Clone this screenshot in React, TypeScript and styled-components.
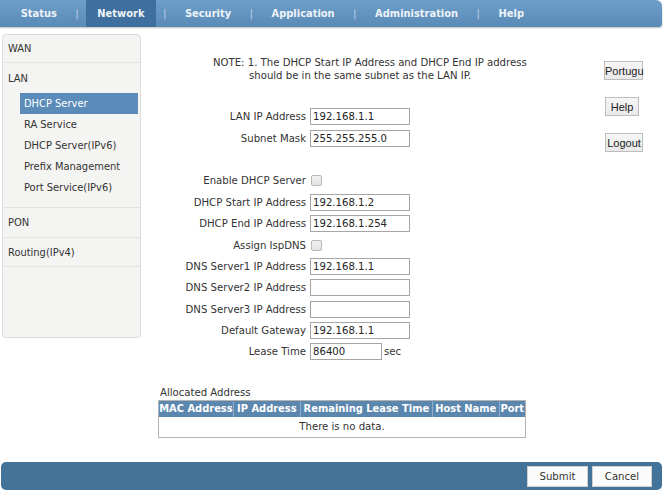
import React from "react";
import styled, { createGlobalStyle } from "styled-components";

const Global = createGlobalStyle`
  html, body { margin: 0; padding: 0; background: #fff; }
  body { font-family: "DejaVu Sans Condensed", "DejaVu Sans", sans-serif; font-size: 11.25px; color: #333; }
`;

const Page = styled.div`
  width: 664px;
  height: 492px;
  display: flex;
  flex-direction: column;
  overflow: hidden;
`;

const Nav = styled.div`
  height: 27px;
  margin: 0 2px 0 0;
  display: flex;
  align-items: stretch;
  padding-left: 9px;
  background: linear-gradient(#6d9dc9, #5a8ab6);
  border-radius: 0 6px 3px 0;
  box-shadow: 0 1px 2px rgba(0, 0, 0, 0.25);
`;

const Tab = styled.div<{ $active?: boolean }>`
  display: flex;
  align-items: center;
  padding: 0 11.7px;
  font-weight: bold;
  font-size: 11px;
  color: #eef3f8;
  background: ${(p) => (p.$active ? "#3e6f9f" : "transparent")};
`;

const Sep = styled.div`
  display: flex;
  align-items: center;
  margin: 0 7px;
  color: #c7d8e9;
  font-size: 10px;
`;

const Main = styled.div`
  display: flex;
  margin-top: 7px;
`;

const Sidebar = styled.div`
  width: 137px;
  height: 302px;
  margin-left: 2px;
  background: #f4f4f2;
  border: 1px solid #dcdcda;
  border-radius: 4px;
  box-sizing: content-box;
`;

const TopItem = styled.div<{ $h: number; $line?: boolean }>`
  height: ${(p) => p.$h}px;
  display: flex;
  align-items: center;
  padding-left: 5px;
  color: #333;
  font-size: 11px;
  border-bottom: ${(p) => (p.$line ? "1px solid #e4e4e2" : "none")};
  box-sizing: border-box;
`;

const Group = styled.div`
  border-bottom: 1px solid #e4e4e2;
  padding-bottom: 9px;
`;

const SubItem = styled.div<{ $active?: boolean }>`
  height: 21px;
  display: flex;
  align-items: center;
  margin: 0 2px 0 17px;
  padding-left: 4px;
  font-size: 11px;
  color: ${(p) => (p.$active ? "#fff" : "#333")};
  background: ${(p) => (p.$active ? "#5b8bb9" : "transparent")};
`;

const Center = styled.div`
  width: 459px;
  display: flex;
  flex-direction: column;
`;

const Note = styled.div`
  margin-top: 22px;
  line-height: 13px;
  color: #333;
`;

const NoteLine = styled.div<{ $indent: number }>`
  padding-left: ${(p) => p.$indent}px;
  white-space: nowrap;
`;

const Form = styled.div`
  margin-top: 24px;
  display: grid;
  grid-template-columns: 165px auto;
  grid-auto-rows: 21.4px;
  column-gap: 4px;
  align-items: center;
`;

const Label = styled.div`
  text-align: right;
  white-space: nowrap;
  color: #333;
`;

const Field = styled.div`
  display: flex;
  align-items: center;
  gap: 2px;
`;

const TextInput = styled.input<{ $w?: number }>`
  width: ${(p) => p.$w ?? 100}px;
  height: 17px;
  box-sizing: border-box;
  border: 1px solid #a5a5a5;
  padding: 0 2px;
  font-family: inherit;
  font-size: 11.25px;
  color: #222;
  outline: none;
  margin: 0;
`;

const Check = styled.input`
  appearance: none;
  width: 11px;
  height: 11px;
  margin: 0 0 0 1px;
  border: 1px solid #b8b8b8;
  border-radius: 2px;
  background: linear-gradient(#f2f2f2, #e2e2e2);
`;

const Spacer = styled.div`
  grid-column: 1 / span 2;
`;

const Unit = styled.span`
  color: #333;
`;

const Allocated = styled.div`
  margin: 23px 0 0 19px;
  line-height: 13px;
  color: #333;
`;

const Table = styled.table`
  margin-left: 17px;
  margin-top: 1px;
  width: 368px;
  border-collapse: collapse;
  border: 1px solid #b4b4b4;
`;

const Th = styled.th<{ $w: number }>`
  width: ${(p) => p.$w}px;
  height: 16px;
  padding: 0;
  background: #5b86ae;
  color: #fff;
  font-size: 11px;
  font-weight: bold;
  white-space: nowrap;
  overflow: hidden;
  border-left: 1px solid #8eaccb;
  &:first-child { border-left: none; }
`;

const Td = styled.td`
  height: 20px;
  padding: 0;
  text-align: center;
  color: #333;
`;

const Side = styled.div`
  display: flex;
  flex-direction: column;
  align-items: flex-start;
  padding-top: 27px;
  margin-left: 4px;
  gap: 17px;
`;

const SideButton = styled.button<{ $w: number; $ml?: number }>`
  width: ${(p) => p.$w}px;
  height: 19px;
  margin-left: ${(p) => p.$ml ?? 0}px;
  padding: 0;
  white-space: nowrap;
  text-align: center;
  font-family: "Liberation Sans", Arial, sans-serif;
  font-size: 11px;
  color: #222;
  background: linear-gradient(#f6f6f6, #e9e9e9);
  border: 1px solid #bdbdbd;
  border-radius: 0;
`;

const Footer = styled.div`
  margin: auto 2px 2px 1px;
  height: 28px;
  background: #44739a;
  border-radius: 5px;
  display: flex;
  align-items: center;
  justify-content: flex-end;
  padding-right: 10px;
  gap: 4px;
`;

const FootButton = styled.button<{ $w: number }>`
  width: ${(p) => p.$w}px;
  height: 21px;
  padding: 0;
  font-family: inherit;
  font-size: 11.25px;
  color: #333;
  background: #fbfbfb;
  border: 1px solid #d0d0d0;
  border-radius: 0;
`;

const rows1 = [
  { label: "LAN IP Address", value: "192.168.1.1" },
  { label: "Subnet Mask", value: "255.255.255.0" },
];

const rows2: { label: string; value?: string; check?: boolean; w?: number; unit?: string }[] = [
  { label: "Enable DHCP Server", check: true },
  { label: "DHCP Start IP Address", value: "192.168.1.2" },
  { label: "DHCP End IP Address", value: "192.168.1.254" },
  { label: "Assign IspDNS", check: true },
  { label: "DNS Server1 IP Address", value: "192.168.1.1" },
  { label: "DNS Server2 IP Address", value: "" },
  { label: "DNS Server3 IP Address", value: "" },
  { label: "Default Gateway", value: "192.168.1.1" },
  { label: "Lease Time", value: "86400", w: 72, unit: "sec" },
];

const tabs = ["Status", "Network", "Security", "Application", "Administration", "Help"];

const cols = [
  { name: "MAC Address", w: 74 },
  { name: "IP Address", w: 68 },
  { name: "Remaining Lease Time", w: 133 },
  { name: "Host Name", w: 67 },
  { name: "Port", w: 26 },
];

export default function App() {
  return (
    <Page>
      <Global />
      <Nav>
        {tabs.map((t, i) => (
          <React.Fragment key={t}>
            {i > 0 && <Sep>|</Sep>}
            <Tab $active={t === "Network"}>{t}</Tab>
          </React.Fragment>
        ))}
      </Nav>
      <Main>
        <Sidebar>
          <TopItem $h={28} $line>WAN</TopItem>
          <Group>
            <TopItem $h={30}>LAN</TopItem>
            <SubItem $active>DHCP Server</SubItem>
            <SubItem>RA Service</SubItem>
            <SubItem>DHCP Server(IPv6)</SubItem>
            <SubItem>Prefix Management</SubItem>
            <SubItem>Port Service(IPv6)</SubItem>
          </Group>
          <TopItem $h={30} $line>PON</TopItem>
          <TopItem $h={29} $line>Routing(IPv4)</TopItem>
        </Sidebar>
        <Center>
          <Note>
            <NoteLine $indent={72}>NOTE: 1. The DHCP Start IP Address and DHCP End IP address</NoteLine>
            <NoteLine $indent={108}>should be in the same subnet as the LAN IP.</NoteLine>
          </Note>
          <Form>
            {rows1.map((r) => (
              <React.Fragment key={r.label}>
                <Label>{r.label}</Label>
                <Field>
                  <TextInput defaultValue={r.value} />
                </Field>
              </React.Fragment>
            ))}
            <Spacer />
            {rows2.map((r) => (
              <React.Fragment key={r.label}>
                <Label>{r.label}</Label>
                <Field>
                  {r.check ? (
                    <Check type="checkbox" />
                  ) : (
                    <TextInput $w={r.w} defaultValue={r.value} />
                  )}
                  {r.unit && <Unit>{r.unit}</Unit>}
                </Field>
              </React.Fragment>
            ))}
          </Form>
          <Allocated>Allocated Address</Allocated>
          <Table>
            <thead>
              <tr>
                {cols.map((c) => (
                  <Th key={c.name} $w={c.w}>{c.name}</Th>
                ))}
              </tr>
            </thead>
            <tbody>
              <tr>
                <Td colSpan={5}>There is no data.</Td>
              </tr>
            </tbody>
          </Table>
        </Center>
        <Side>
          <SideButton $w={39}>Portugu</SideButton>
          <SideButton $w={34} $ml={1}>Help</SideButton>
          <SideButton $w={38} $ml={1}>Logout</SideButton>
        </Side>
      </Main>
      <Footer>
        <FootButton $w={61}>Submit</FootButton>
        <FootButton $w={60}>Cancel</FootButton>
      </Footer>
    </Page>
  );
}
